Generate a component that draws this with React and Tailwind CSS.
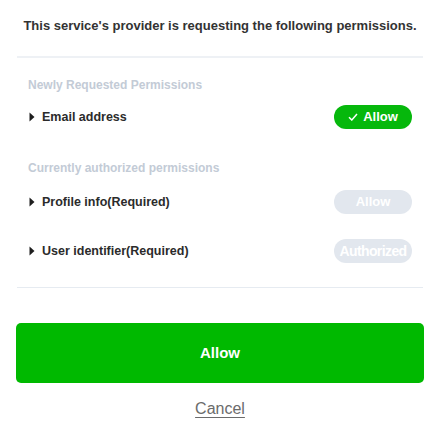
import React from "react";

function Caret() {
  return (
    <svg width="6" height="10" viewBox="0 0 6 10" className="shrink-0">
      <path d="M0.5 0.5 L5.5 5 L0.5 9.5 Z" fill="#1e1e1e" />
    </svg>
  );
}

function Row({ label, children, className }) {
  return (
    <div className={"flex items-center justify-between pl-[29px] pr-[28px] " + (className || "")}>
      <div className="flex items-center gap-[7px]">
        <Caret />
        <span className="text-[12.5px] font-bold text-[#2b2b2b]">{label}</span>
      </div>
      {children}
    </div>
  );
}

export default function App() {
  return (
    <div
      className="w-[440px] h-[430px] bg-white flex flex-col"
      style={{ fontFamily: '"Liberation Sans", Arial, sans-serif' }}
    >
      <div className="pt-[18px] text-center text-[13px] font-bold text-[#333333] leading-[16px]">
        This service's provider is requesting the following permissions.
      </div>
      <div className="mx-[17px] mt-[22px] h-[2px] bg-[#eef1f5]" />

      <div className="pl-[28px] mt-[20px] text-[12px] font-bold text-[#c3cbd6] leading-[14px]">
        Newly Requested Permissions
      </div>
      <Row label="Email address" className="mt-[13px]">
        <div className="w-[78px] h-[24px] rounded-full bg-[#06b80c] flex items-center justify-center gap-[5px] text-white text-[13px] font-bold">
          <svg width="10" height="8" viewBox="0 0 10 8">
            <path d="M1 4.2 L3.8 7 L9 1" fill="none" stroke="white" strokeWidth="1.5" />
          </svg>
          Allow
        </div>
      </Row>

      <div className="pl-[28px] mt-[32px] text-[12px] font-bold text-[#c3cbd6] leading-[14px]">
        Currently authorized permissions
      </div>
      <Row label="Profile info(Required)" className="mt-[15px]">
        <div className="w-[78px] h-[24px] rounded-full bg-[#e2e7ee] flex items-center justify-center text-white text-[13px] font-bold">
          Allow
        </div>
      </Row>
      <Row label="User identifier(Required)" className="mt-[25px]">
        <div className="w-[78px] h-[24px] rounded-full bg-[#e2e7ee] flex items-center justify-center text-white text-[14px] font-bold tracking-[-0.6px] whitespace-nowrap overflow-visible">
          Authorized
        </div>
      </Row>
      <div className="mx-[17px] mt-[24px] h-[1px] bg-[#e6ebf1]" />

      <button className="mx-[16px] mt-[35px] h-[60px] shrink-0 rounded-[5px] bg-[#00b900] text-white text-[15px] font-bold">
        Allow
      </button>
      <div className="mt-[14px] text-center">
        <span className="text-[16px] text-[#6b6b6b] underline underline-offset-[3px]">Cancel</span>
      </div>
    </div>
  );
}
